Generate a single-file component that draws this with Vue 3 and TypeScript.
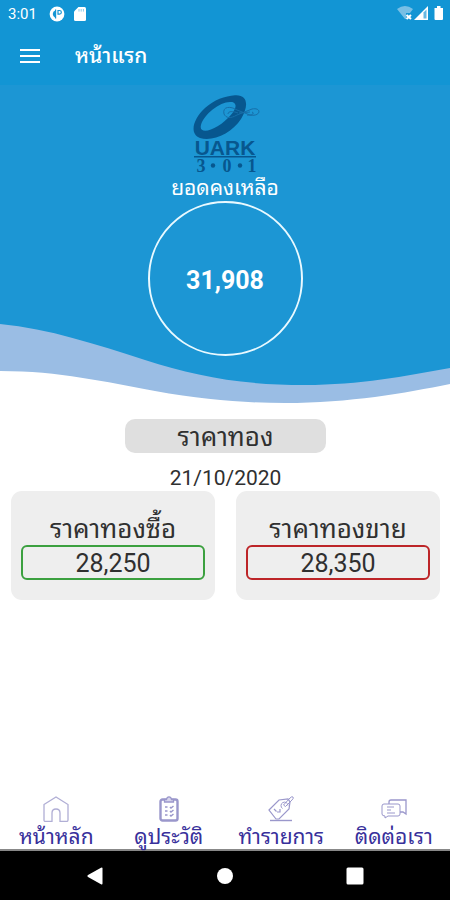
<script setup lang="ts">
interface Price {
  id: string
  label: string
  value: string
}

interface Tab {
  id: string
  label: string
}

const balance = '31,908'
const date = '21/10/2020'

const prices: Price[] = [
  { id: 'buy', label: 'ราคาทองซื้อ', value: '28,250' },
  { id: 'sell', label: 'ราคาทองขาย', value: '28,350' },
]

const tabs: Tab[] = [
  { id: 'home', label: 'หน้าหลัก' },
  { id: 'history', label: 'ดูประวัติ' },
  { id: 'orders', label: 'ทำรายการ' },
  { id: 'contact', label: 'ติดต่อเรา' },
]
</script>

<template>
  <div class="screen">
    <div class="status">
      <span class="clock">3:01</span>
      <svg class="status-icon" width="16" height="16" viewBox="0 0 16 16">
        <circle cx="8" cy="8" r="7.4" fill="#fff" />
        <path d="M6.400 4.200A4.200 4.200 0 0 0 6.400 12Z" fill="#1295d4" />
        <path d="M6.600 3.400V12.600M9 4.500V8.200H10.500A1.800 1.800 0 0 0 10.500 4.500Z" fill="none" stroke="#1295d4" stroke-width="1.200" />
      </svg>
      <svg class="status-icon" width="12" height="14" viewBox="0 0 12 14">
        <path d="M4.4 0H10.5Q12 0 12 1.5V12.5Q12 14 10.5 14H1.5Q0 14 0 12.5V4.5Z" fill="#fff" />
        <path d="M5 2V4.6M7.2 2V4.6M9.4 2V4.6" stroke="#8ccbea" stroke-width="1" />
      </svg>
      <span class="grow"></span>
      <svg width="47" height="15" viewBox="0 0 47 15">
        <path d="M0 3Q8 -3 16 3L13 7H9V13L8 13Z" fill="#78bfe5" />
        <path d="M9.5 9L14 13M14 9L9.5 13" stroke="#fff" stroke-width="2" />
        <path d="M17 14L31 0V14Z" fill="#fff" />
        <path d="M26.5 6.5L29.5 3.5V12.5H26.5Z" fill="#67b8e2" />
        <path d="M37.500 2H40V0H43.500V2H46V13Q46 14 45 14H38.500Q37.500 14 37.500 13Z" fill="#fff" />
      </svg>
    </div>

    <header class="bar">
      <button class="menu" type="button" aria-label="เมนู">
        <svg width="20" height="16" viewBox="0 0 20 16">
          <path d="M0 2H20M0 8H20M0 14H20" stroke="#fff" stroke-width="2.2" />
        </svg>
      </button>
      <h1 class="title">หน้าแรก</h1>
    </header>

    <section class="hero">
      <svg class="wave" viewBox="0 0 450 83" preserveAspectRatio="none">
        <path d="M0 4C50 9 95 24 145 40C195 56 240 65 305 65C360 65 405 56 450 48V83H0Z" fill="#9abde4" />
        <path d="M0 51C60 51 105 62 155 71C205 80 245 83 285 83C350 83 405 73 450 64V84H0Z" fill="#fff" />
      </svg>
      <svg class="logo" width="72" height="80" viewBox="0 0 72 80">
        <g fill="#07578f">
          <path fill-rule="evenodd" d="M46 .3C59 -.5 60 11 52 24C43 38 24 47 11 43C0 39 4 24 16 13C25 5 36 1 46 .3ZM42 7C32 6 15 19 12 30C10 37 18 38 29 31C40 24 49 13 46 9C45 7.500 44 7 42 7Z" />
          <text class="brand" x="36" y="60" text-anchor="middle">UARK</text>
          <path d="M5 61H67V62.500H5Z" />
          <text class="sub" x="12" y="77" text-anchor="middle">3</text>
          <text class="sub" x="38" y="77" text-anchor="middle">0</text>
          <text class="sub" x="63" y="77" text-anchor="middle">1</text>
          <circle cx="24" cy="70.500" r="2.200" />
          <circle cx="51" cy="70.500" r="2.200" />
        </g>
        <path d="M35 19C33 11 42 11 48 15L61 20C72 22 73 12 63 14L48 20C41 24 37 23 35 19ZM39 19C39 16 44 16 49 18M50 18L61 17M58 20C63 21 66 18 63 17" fill="none" stroke="#176ea8" stroke-width="1" />
      </svg>
      <p class="balance-label">ยอดคงเหลือ</p>
      <div class="balance">{{ balance }}</div>
    </section>

    <main class="content">
      <h2 class="pill">ราคาทอง</h2>
      <p class="date">{{ date }}</p>
      <div class="cards">
        <article v-for="p in prices" :key="p.id" class="card">
          <h3 class="card-label">{{ p.label }}</h3>
          <div class="price" :class="p.id">{{ p.value }}</div>
        </article>
      </div>
    </main>

    <nav class="tabs">
      <a v-for="t in tabs" :key="t.id" class="tab" :href="'#' + t.id">
        <svg class="tab-icon" width="26" height="26" viewBox="0 0 26 26" fill="none" stroke="#9a97cb" stroke-width="1">
          <path v-if="t.id === 'home'" d="M1 8.500L13 1L25 8.500V24Q25 25.500 23.500 25.500H17V17Q17 13 13 13T9 17V25.500H2.500Q1 25.500 1 24Z" stroke="#b0aed5" stroke-width="1.300" />
          <g v-else-if="t.id === 'history'">
            <rect x="4.500" y="3.500" width="17" height="21" rx="2" stroke-width="2.400" />
            <path d="M8.500 6V3.500H10.500Q11 .8 13 .8T15.500 3.500H17.500V6Z" fill="#d8d6ec" stroke-width="1.300" />
            <path d="M9 11H11.500M9 15H11.500M9 19H11.500M14 11L15 12L17.500 10M14 15L15 16L17.500 14M14 19L15 20L17.500 18" stroke-width="1.500" />
          </g>
          <g v-else-if="t.id === 'orders'">
            <path d="M1 14L11 4L20 3L22 6L21 13L11 23L8 23Z" stroke-width="1.200" />
            <path d="M14.500 12.500A3.500 3.500 0 1 1 20 9.500M15.500 9L22 2Q24 0 25 1T24 4L17.500 10.500Z" />
            <path d="M6 13L8.500 15.500M9 16L12 16V13" stroke-width="1.200" />
            <path d="M2 24.500H24" stroke-width="1.400" />
          </g>
          <g v-else>
            <path d="M8 8V6Q8 4 10 4H25V18L22 16H19" stroke-width="1.300" />
            <path d="M3 8H17Q19 8 19 10V18Q19 20 17 20H7L4 22V20Q1 20 1 18V10Q1 8 3 8Z" />
            <path d="M6 11H13M6 14H10M6 17H14" />
          </g>
        </svg>
        <span>{{ t.label }}</span>
      </a>
    </nav>

    <div class="system">
      <button type="button" aria-label="ย้อนกลับ">
        <svg width="18" height="18" viewBox="0 0 18 18"><path d="M15 .8Q16.500 0 16.500 1.500V16.500Q16.500 18 15 17.200L2 10Q.5 9 2 8Z" fill="#fff" /></svg>
      </button>
      <button type="button" aria-label="หน้าจอหลัก">
        <svg width="18" height="18" viewBox="0 0 18 18"><circle cx="9" cy="9" r="8" fill="#fff" /></svg>
      </button>
      <button type="button" aria-label="แอปล่าสุด">
        <svg width="18" height="18" viewBox="0 0 18 18"><rect x=".5" y=".5" width="17" height="17" rx="1.500" fill="#fff" /></svg>
      </button>
    </div>
  </div>
</template>

<style>
body {
  background: #fff;
}
</style>

<style scoped>
.screen {
  display: flex;
  flex-direction: column;
  min-height: 100vh;
  font-family: Roboto, "Noto Sans Thai Looped", Waree, Loma, Garuda, "Noto Sans", sans-serif;
  color: #303030;
}

h1, h2, h3, p {
  margin: 0;
  font-weight: 400;
}

button {
  padding: 0;
  border: 0;
  background: none;
}

svg {
  display: block;
}

.status {
  display: flex;
  align-items: center;
  height: 27px;
  padding: 0 6px 0 8px;
  background: #1295d4;
  color: #fff;
}

.clock {
  font-size: 15px;
  line-height: 16px;
}

.status-icon {
  margin-left: 12px;
}

.status-icon + .status-icon {
  margin-left: 9px;
}

.grow {
  flex: 1;
}

.bar {
  display: flex;
  align-items: center;
  gap: 35px;
  height: 58px;
  padding: 0 20px;
  background: #1295d4;
  color: #fff;
}

.title {
  font-size: 21px;
  font-weight: 500;
  line-height: 28px;
}

.hero {
  position: relative;
  display: flex;
  flex-direction: column;
  align-items: center;
  padding: 10px 0 47px;
  background: #1c96d4;
  color: #fff;
}

.wave {
  position: absolute;
  left: 0;
  bottom: 0;
  width: 100%;
  height: 83px;
}

.logo {
  position: relative;
}

.brand {
  font: bold 21px "Liberation Sans", sans-serif;
}

.sub {
  font: bold 18px "Liberation Serif", serif;
}

.balance-label {
  font-size: 21px;
  line-height: 26px;
}

.balance {
  position: relative;
  display: flex;
  align-items: center;
  justify-content: center;
  box-sizing: border-box;
  width: 155px;
  height: 155px;
  padding-top: 3px;
  border: 2px solid #e9f9ff;
  border-radius: 50%;
  font-size: 25px;
  font-weight: 700;
}

.content {
  flex: 1;
  display: flex;
  flex-direction: column;
  align-items: center;
  padding: 16px 10px 16px 11px;
}

.pill {
  box-sizing: border-box;
  width: 47%;
  padding-top: 2px;
  border-radius: 10px;
  background: #dfdfdf;
  font-size: 26px;
  line-height: 32px;
  text-align: center;
}

.date {
  margin: 12px 0 0;
  font-size: 21px;
  line-height: 26px;
}

.cards {
  display: grid;
  grid-template-columns: 1fr 1fr;
  gap: 21px;
  width: 100%;
}

.card {
  padding: 22px 10px 20px;
  border-radius: 11px;
  background: #eee;
  text-align: center;
}

.card-label {
  font-size: 26px;
  line-height: 32px;
}

.price {
  padding-top: 2px;
  border: 2px solid;
  border-radius: 6px;
  font-size: 25px;
  line-height: 29px;
}

.buy {
  border-color: #3ba03f;
}

.sell {
  border-color: #bd2528;
}

.price {
  color: #303030;
}

.tabs {
  display: grid;
  grid-template-columns: repeat(4, 1fr);
  border-bottom: 2px solid #888;
}

.tab {
  display: flex;
  flex-direction: column;
  align-items: center;
  gap: 3px;
  color: #38309b;
  font-size: 21px;
  line-height: 24px;
  text-decoration: none;
  white-space: nowrap;
}

.system {
  display: flex;
  justify-content: space-between;
  align-items: center;
  height: 49px;
  padding: 0 86px;
  background: #000;
}
</style>
